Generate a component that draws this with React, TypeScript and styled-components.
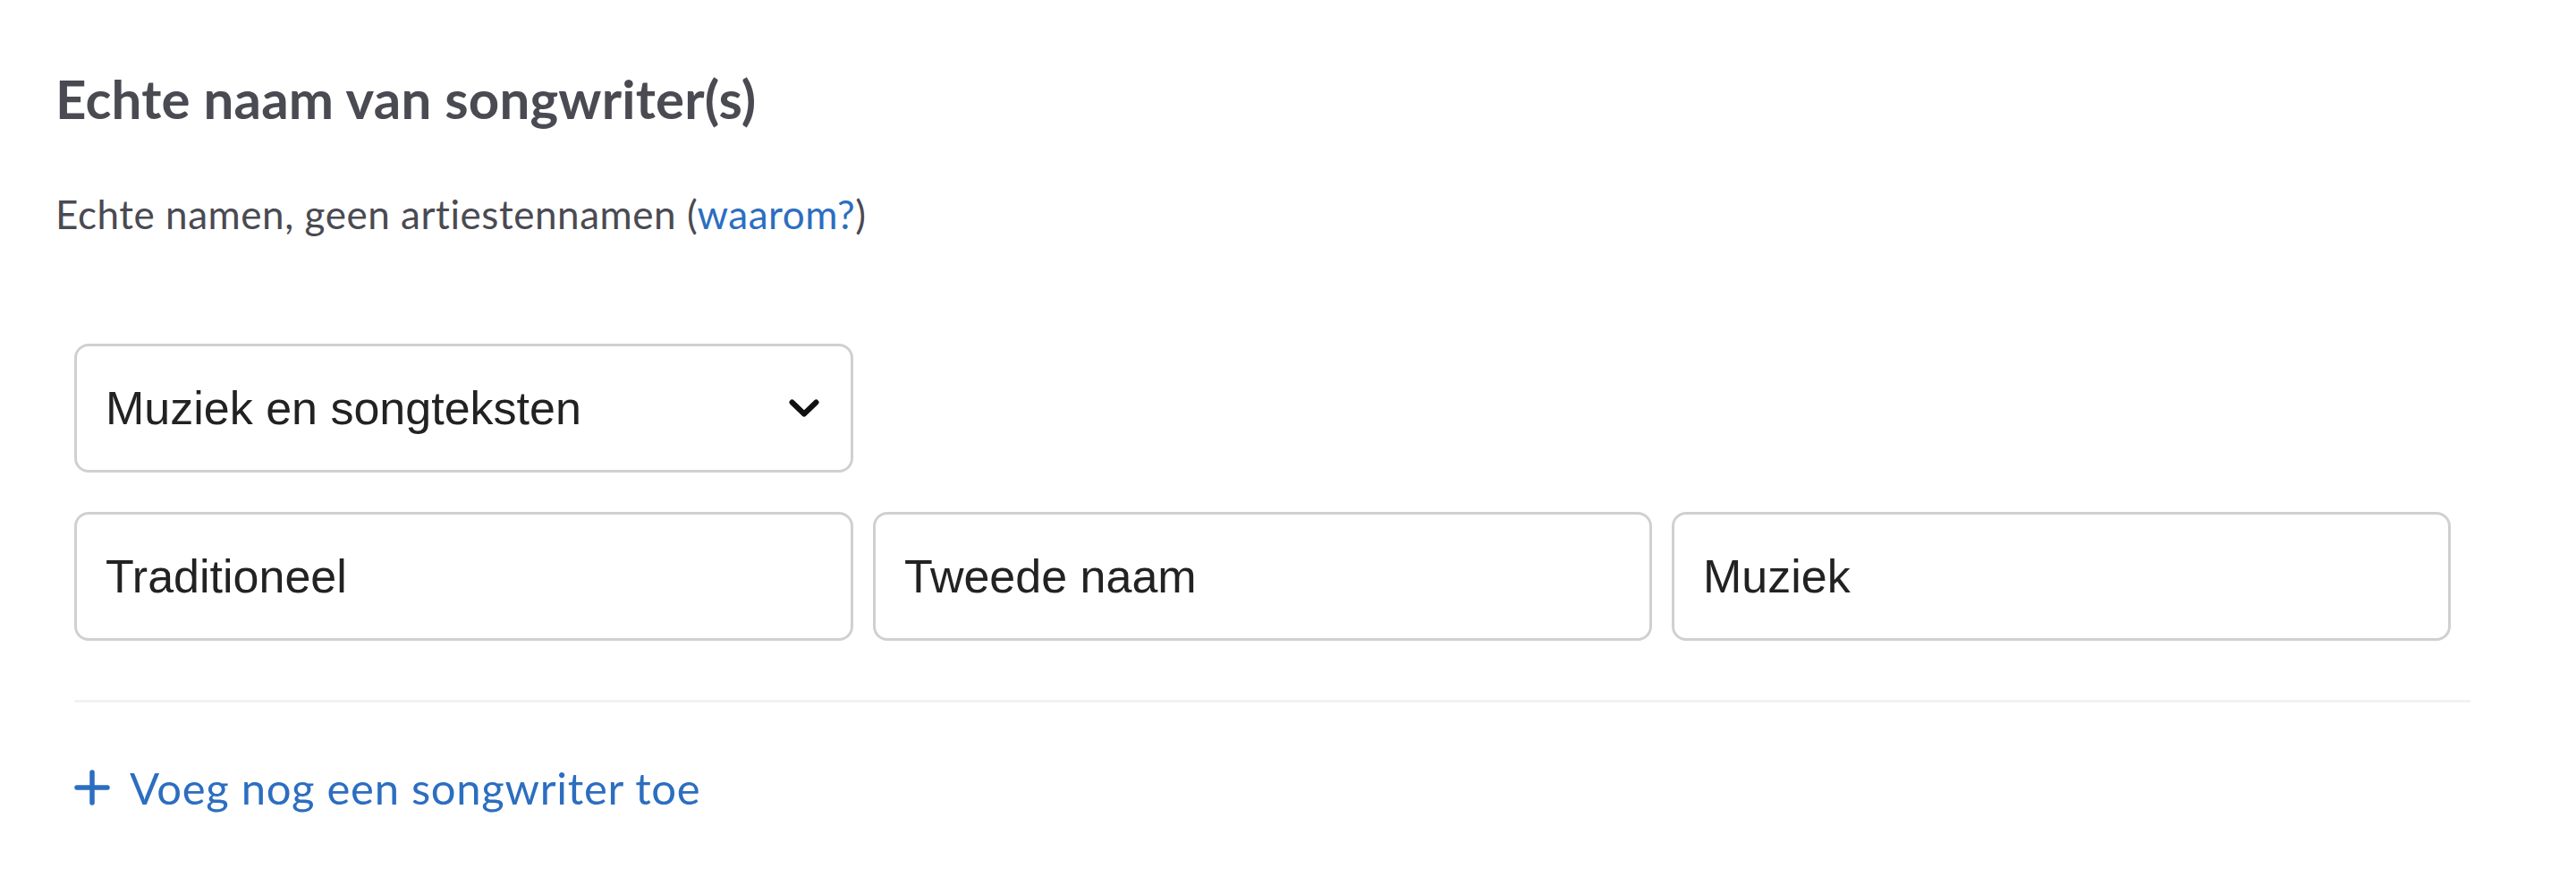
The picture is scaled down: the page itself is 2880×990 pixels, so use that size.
import React, { useState } from "react";
import styled, { createGlobalStyle } from "styled-components";

const GlobalStyle = createGlobalStyle`
  html, body {
    margin: 0;
    padding: 0;
    background: #ffffff;
  }
  body {
    font-family: Lato, "Liberation Sans", sans-serif;
  }
`;

const Section = styled.section`
  padding: 74px 0 0 62px;
  width: 2700px;
`;

const Title = styled.h2`
  margin: 0;
  font-family: Lato, sans-serif;
  font-weight: 700;
  font-size: 60px;
  line-height: 72px;
  letter-spacing: 0.2px;
  color: #4a4a52;
`;

const Hint = styled.p`
  margin: 67px 0 0;
  font-family: Lato, sans-serif;
  font-size: 44px;
  line-height: 52px;
  letter-spacing: 0.55px;
  color: #4a4a52;
  a {
    color: #2c6ec0;
    text-decoration: none;
  }
`;

const Fields = styled.div`
  margin: 119px 0 0 21px;
  padding-right: 22px;
  display: flex;
  flex-direction: column;
  gap: 44px;
`;

const Row = styled.div`
  display: grid;
  grid-template-columns: repeat(3, 1fr);
  gap: 22px;
`;

const Box = styled.div`
  position: relative;
  height: 144px;
  box-sizing: border-box;
  border: 3px solid #d0d0d0;
  border-radius: 16px;
  background: #fff;
  display: flex;
  align-items: center;
`;

const Input = styled.input`
  flex: 1;
  min-width: 0;
  height: 100%;
  border: 0;
  outline: none;
  background: transparent;
  padding: 0 32px;
  font-family: "Liberation Sans", Arial, sans-serif;
  font-size: 52px;
  color: #222222;
`;

const Select = styled.select`
  flex: 1;
  height: 100%;
  border: 0;
  outline: none;
  appearance: none;
  background: transparent;
  padding: 0 32px;
  font-family: "Liberation Sans", Arial, sans-serif;
  font-size: 52px;
  color: #222222;
`;

const Chevron = styled.svg`
  position: absolute;
  right: 35px;
  top: 50%;
  transform: translateY(-50%);
  pointer-events: none;
`;

const Divider = styled.hr`
  margin: 66px 0 0 21px;
  border: 0;
  height: 3px;
  background: #f1f2f4;
`;

const AddButton = styled.button`
  margin: 66px 0 0 21px;
  padding: 0;
  border: 0;
  background: none;
  display: flex;
  align-items: center;
  gap: 22px;
  font-family: Lato, sans-serif;
  font-size: 49px;
  line-height: 58px;
  letter-spacing: 0.7px;
  color: #2c6ec0;
  cursor: pointer;
`;

const App: React.FC = () => {
  const [role, setRole] = useState("both");
  const [names, setNames] = useState(["Traditioneel", "Tweede naam", "Muziek"]);

  const setName = (i: number, v: string) => {
    const next = [...names];
    next[i] = v;
    setNames(next);
  };

  return (
    <>
      <GlobalStyle />
      <Section>
        <Title>Echte naam van songwriter(s)</Title>
        <Hint>
          Echte namen, geen artiestennamen (<a href="#">waarom?</a>)
        </Hint>
        <Fields>
          <Row>
            <Box>
              <Select value={role} onChange={(e) => setRole(e.target.value)}>
                <option value="both">Muziek en songteksten</option>
                <option value="music">Muziek</option>
                <option value="lyrics">Songteksten</option>
              </Select>
              <Chevron width="34" height="20" viewBox="0 0 34 20">
                <path
                  d="M3.5 3.5 L17 16.5 L30.5 3.5"
                  fill="none"
                  stroke="#111"
                  strokeWidth="6"
                  strokeLinecap="round"
                  strokeLinejoin="round"
                />
              </Chevron>
            </Box>
          </Row>
          <Row>
            {names.map((n, i) => (
              <Box key={i}>
                <Input value={n} onChange={(e) => setName(i, e.target.value)} />
              </Box>
            ))}
          </Row>
        </Fields>
        <Divider />
        <AddButton>
          <svg width="40" height="40" viewBox="0 0 40 40">
            <path
              d="M20 3 V37 M3 20 H37"
              stroke="#2c6ec0"
              strokeWidth="5.5"
              strokeLinecap="round"
            />
          </svg>
          Voeg nog een songwriter toe
        </AddButton>
      </Section>
    </>
  );
};

export default App;
